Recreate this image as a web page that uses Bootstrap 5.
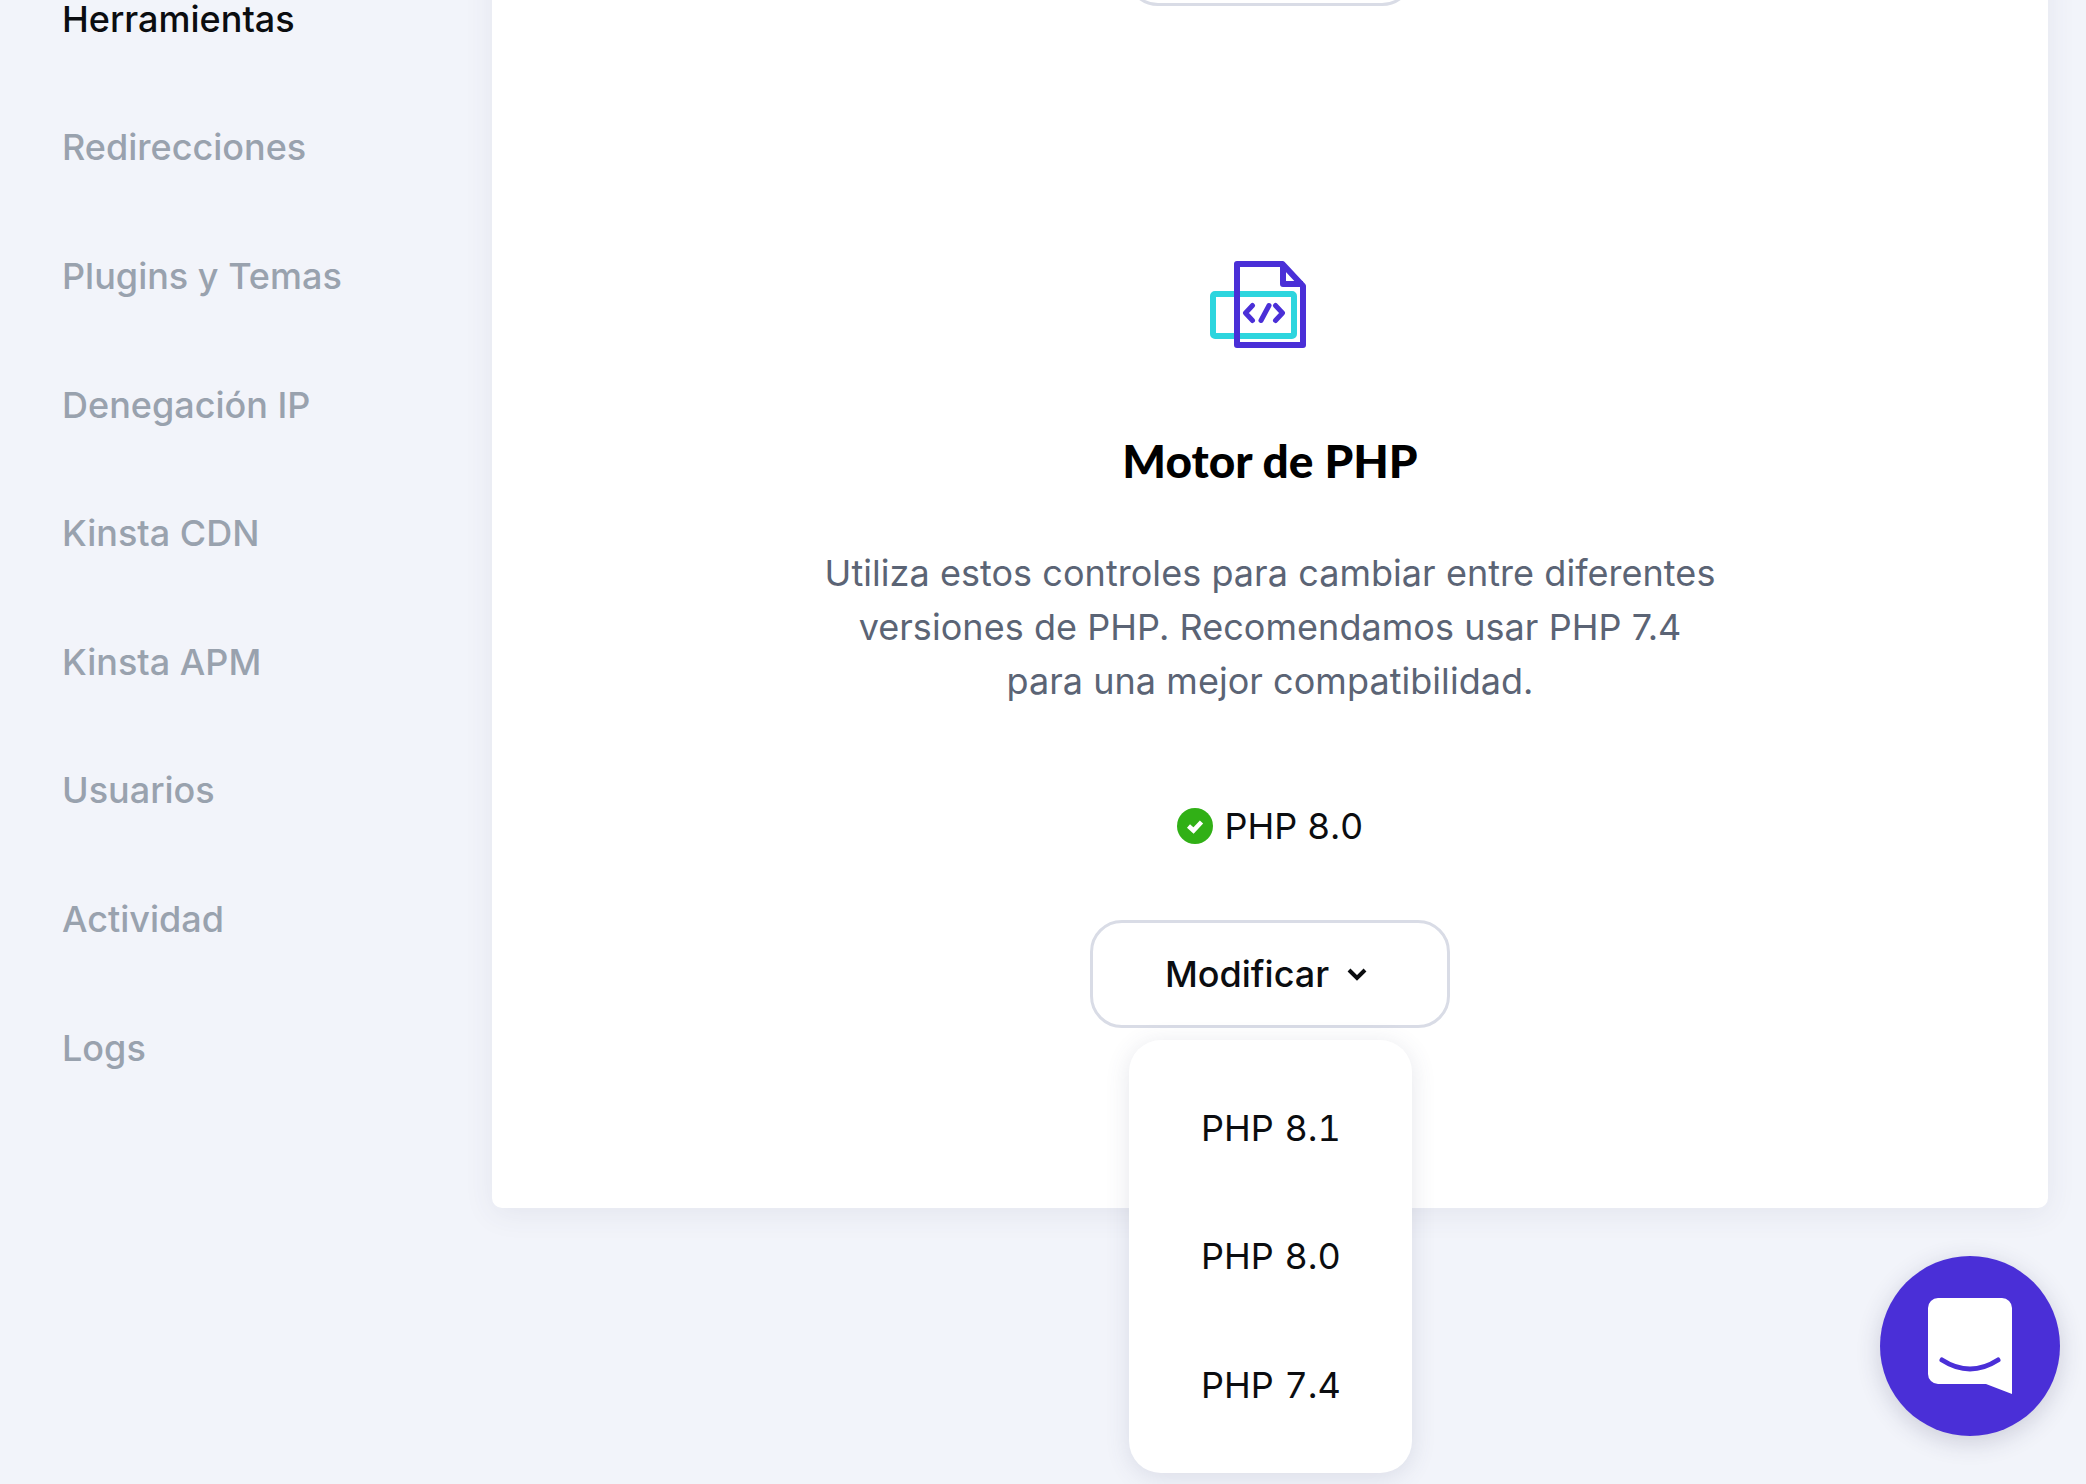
<!DOCTYPE html>
<html lang="es">
<head>
    <meta charset="UTF-8">
    <meta name="viewport" content="width=device-width, initial-scale=1.0">
    <title>Herramientas</title>
    <link href="https://cdn.jsdelivr.net/npm/bootstrap@5.3.0/dist/css/bootstrap.min.css" rel="stylesheet">
    <style>
        html, body {
            height: 100%;
            overflow: hidden;
        }
        body {
            background: #f2f4fa;
            color: #0b0d10;
            font-family: "Inter", "Liberation Sans", sans-serif;
        }
        .page-wrap {
            margin-top: -120px;
            height: 1604px;
        }
        .side-col {
            width: 492px;
            padding: 74.5px 0 0 62px;
        }
        .side-link {
            height: 128.6px;
            padding: 0;
            font-size: 36px;
            font-weight: 500;
            color: #99a2ae;
        }
        .side-link.is-current {
            color: #0b0d10;
        }
        .main-card {
            width: 1556px;
            height: 1328px;
            padding-top: 18px;
            border: 0;
            border-radius: 10px;
            box-shadow: 0 6px 30px rgba(60, 65, 100, .08);
        }
        .outline-btn {
            height: 108px;
            border: 3px solid #d9dce6;
            border-radius: 32px;
            background: #fff;
            color: #0b0d10;
            font-size: 36px;
            font-weight: 500;
        }
        .outline-btn:hover, .outline-btn:active, .outline-btn.show {
            border-color: #d9dce6 !important;
            background: #fff !important;
            color: #0b0d10 !important;
        }
        .prev-btn {
            width: 288px;
        }
        .php-icon {
            display: block;
            margin-top: 255px;
            margin-left: -24px;
        }
        .php-title {
            margin: 85px 0 0;
            font-family: "Lato", "Inter", sans-serif;
            font-size: 46px;
            line-height: 56px;
            font-weight: 900;
            color: #000;
        }
        .php-text {
            margin: 57px 0 0;
            font-size: 36px;
            line-height: 54.2px;
            letter-spacing: .05px;
            color: #5b6475;
        }
        .php-status {
            margin-top: 94px;
            height: 46px;
            font-size: 36px;
            line-height: 46px;
            gap: 12px;
            font-variant-numeric: tabular-nums;
        }
        .php-drop {
            margin-top: 71px;
        }
        .modify-btn {
            width: 360px;
            gap: 18px;
            padding-right: 20px;
        }
        .php-menu {
            width: 283px;
            min-width: 0;
            left: 50%;
            top: 120px;
            margin-left: -141px;
            padding: 24px 0;
            border: 0;
            border-radius: 32px;
            box-shadow: 0 4px 24px rgba(70, 75, 110, .14);
        }
        .php-menu .dropdown-item {
            height: 128.5px;
            padding: 0 0 0 72px;
            font-size: 36px;
            line-height: 128.5px;
            word-spacing: 1px;
            font-variant-numeric: tabular-nums;
            color: #0b0d10;
        }
        .chat-launcher {
            position: fixed;
            left: 1880px;
            top: 1256px;
            width: 180px;
            height: 180px;
            background: #4a2fd7;
            box-shadow: 0 6px 24px rgba(50, 50, 90, .2);
        }
    </style>
</head>
<body>
    <div class="page-wrap d-flex">
        <div class="side-col flex-shrink-0">
            <nav class="nav flex-column">
                <a class="nav-link side-link d-flex align-items-center is-current" href="#">Herramientas</a>
                <a class="nav-link side-link d-flex align-items-center" href="#">Redirecciones</a>
                <a class="nav-link side-link d-flex align-items-center" href="#">Plugins y Temas</a>
                <a class="nav-link side-link d-flex align-items-center" href="#">Denegación IP</a>
                <a class="nav-link side-link d-flex align-items-center" href="#">Kinsta CDN</a>
                <a class="nav-link side-link d-flex align-items-center" href="#">Kinsta APM</a>
                <a class="nav-link side-link d-flex align-items-center" href="#">Usuarios</a>
                <a class="nav-link side-link d-flex align-items-center" href="#">Actividad</a>
                <a class="nav-link side-link d-flex align-items-center" href="#">Logs</a>
            </nav>
        </div>
        <div class="card main-card d-flex flex-column align-items-center text-center">
            <button class="btn outline-btn prev-btn" type="button" aria-label="Acción"></button>

            <svg class="php-icon" width="96" height="87" viewBox="0 0 96 87" fill="none">
                <rect x="3" y="33" width="81" height="42" rx="2" stroke="#2dd5de" stroke-width="6"/>
                <path d="M27 3H72.5L93 25V84H27Z" stroke="#4a2fd7" stroke-width="6" stroke-linejoin="round"/>
                <path d="M73 3V23H93" stroke="#4a2fd7" stroke-width="6" stroke-linejoin="round"/>
                <path d="M42.5 44.5L35.5 52L42.5 59.5M59 44.5L51 59.5M65.5 44.5L72.5 52L65.5 59.5" stroke="#4a2fd7" stroke-width="5" stroke-linecap="round" stroke-linejoin="round"/>
            </svg>

            <h2 class="php-title">Motor de PHP</h2>
            <p class="php-text">Utiliza estos controles para cambiar entre diferentes<br>versiones de PHP. Recomendamos usar PHP 7.4<br>para una mejor compatibilidad.</p>

            <div class="php-status d-flex align-items-center">
                <svg width="36" height="36" viewBox="0 0 36 36">
                    <circle cx="18" cy="18" r="18" fill="#31b016"/>
                    <path d="M11.5 18L16.5 22.5L24.5 14" fill="none" stroke="#fff" stroke-width="4.5"/>
                </svg>
                <span>PHP 8.0</span>
            </div>

            <div class="dropdown php-drop">
                <button class="btn outline-btn modify-btn show d-flex align-items-center justify-content-center" type="button" data-bs-toggle="dropdown" aria-expanded="true">
                    Modificar
                    <svg width="20" height="14" viewBox="0 0 20 14">
                        <path d="M2 3L10 11L18 3" fill="none" stroke="#0b0d10" stroke-width="4"/>
                    </svg>
                </button>
                <ul class="dropdown-menu php-menu show">
                    <li><a class="dropdown-item" href="#">PHP 8.1</a></li>
                    <li><a class="dropdown-item" href="#">PHP 8.0</a></li>
                    <li><a class="dropdown-item" href="#">PHP 7.4</a></li>
                </ul>
            </div>
        </div>
    </div>

    <button class="chat-launcher btn rounded-circle p-0 border-0 d-flex align-items-center justify-content-center" type="button" aria-label="Chat">
        <svg width="84" height="96" viewBox="0 0 84 96">
            <path d="M10 0H74A10 10 0 0 1 84 10V96L58 86H10A10 10 0 0 1 0 76V10A10 10 0 0 1 10 0Z" fill="#fff"/>
            <path d="M14 62Q42 80 70 62" fill="none" stroke="#4a2fd7" stroke-width="5" stroke-linecap="round"/>
        </svg>
    </button>

    <script src="https://cdn.jsdelivr.net/npm/bootstrap@5.3.0/dist/js/bootstrap.bundle.min.js"></script>
</body>
</html>
